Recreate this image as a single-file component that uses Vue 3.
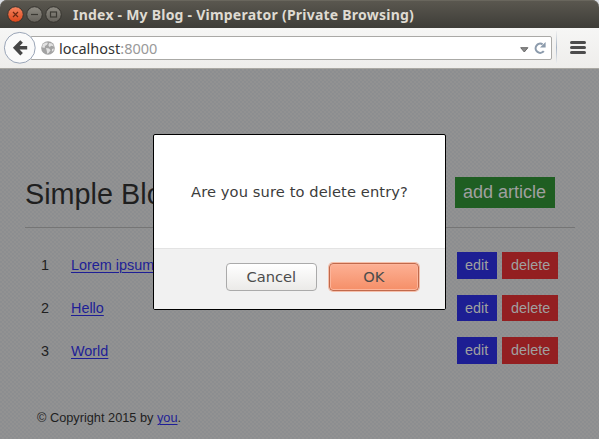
<script setup>
const entries = [
  { id: 1, title: 'Lorem ipsum' },
  { id: 2, title: 'Hello' },
  { id: 3, title: 'World' },
]
</script>

<template>
  <div class="window">
    <header class="titlebar">
      <svg class="controls" width="58" height="18" viewBox="0 0 58 18">
        <defs>
          <linearGradient id="close" x2="0" y2="1">
            <stop offset="0" stop-color="#f58560" />
            <stop offset="1" stop-color="#dc4519" />
          </linearGradient>
          <linearGradient id="gray" x2="0" y2="1">
            <stop offset="0" stop-color="#8d8a82" />
            <stop offset="1" stop-color="#65625b" />
          </linearGradient>
        </defs>
        <g stroke="#35332e">
          <circle cx="9.5" cy="8.5" r="7.8" fill="url(#close)" />
          <circle cx="28.5" cy="8.5" r="7.8" fill="url(#gray)" />
          <circle cx="47.5" cy="8.5" r="7.8" fill="url(#gray)" />
        </g>
        <g fill="none" stroke="#3b3933" stroke-width="1.2">
          <path d="M7 6l5 5M12 6l-5 5" stroke="#6a2812" />
          <path d="M25 8.5h7" />
          <rect x="44.5" y="6" width="6" height="5" />
        </g>
      </svg>
      <span class="title">Index - My Blog - Vimperator (Private Browsing)</span>
    </header>

    <nav class="toolbar">
      <svg class="back" width="34" height="34" viewBox="0 0 34 34">
        <circle cx="16.8" cy="16.8" r="15.4" fill="#fafafa" stroke="#9aa5b7" />
        <path d="M18.6 10.4l-6.2 6.4 6.2 6.4M12.6 16.8h11.6" fill="none" stroke="#464646" stroke-width="3.6" />
      </svg>
      <div class="address">
        <svg class="globe" width="14" height="14" viewBox="0 0 14 14">
          <circle cx="7" cy="7" r="6.8" fill="#a3a3a3" />
          <path d="M2 3l3-1.6 2 .4-1 2-2 1.2-.4 2L1 6.2zM8 2l3 .4 2 3-2.6-.6L8.6 6 7.4 4.4zM5 7l3 .4 1.6 1.8L7.6 12l-1.4.8-.4-2.8zM11 8l2-.6-.8 2.6-1.4.6z" fill="#e2e2e2" />
        </svg>
        <span class="url">localhost<span class="port">:8000</span></span>
        <svg class="drop" width="9" height="6" viewBox="0 0 9 6">
          <path d="M.7.7h7.2L4.3 5z" fill="#8a8a8a" stroke="#686868" />
        </svg>
        <svg class="reload" width="12" height="12" viewBox="0 0 12 12">
          <path d="M8.6 2.3A4.6 4.6 0 1 0 9.8 9.2" fill="none" stroke="#8c9bac" stroke-width="2.1" />
          <path d="M11.6 0v5.6H6z" fill="#8c9bac" />
        </svg>
      </div>
      <i class="divider"></i>
      <div class="menu"><i></i><i></i><i></i></div>
    </nav>

    <main class="page">
      <div class="heading">
        <h1>Simple Blog</h1>
        <a class="btn add">add article</a>
      </div>
      <ul class="entries">
        <li v-for="entry in entries" :key="entry.id">
          <span class="num">{{ entry.id }}</span>
          <a class="link">{{ entry.title }}</a>
          <a class="btn edit">edit</a>
          <a class="btn delete">delete</a>
        </li>
      </ul>
      <footer>© Copyright 2015 by <a class="link">you</a>.</footer>
    </main>

    <div class="dialog">
      <p>Are you sure to delete entry?</p>
      <div class="actions">
        <button class="cancel">Cancel</button>
        <button class="ok">OK</button>
      </div>
    </div>
  </div>
</template>

<style>
body { background: #929292; }
</style>

<style scoped>
* { box-sizing: border-box; }
.window {
  position: relative;
  width: 599px;
  height: 439px;
  overflow: hidden;
  display: flex;
  flex-direction: column;
  background: #d9dde2;
}
.titlebar {
  height: 28px;
  flex: none;
  display: flex;
  align-items: center;
  padding: 1px 0 0 6px;
  border-radius: 7px 7px 0 0;
  background: linear-gradient(#5b5850, #3e3d38);
  box-shadow: inset 0 1px #69665d;
}
.controls { flex: none; }
.title {
  margin-left: 9px;
  color: #dfdbd2;
  font: bold 14px/20px "Noto Sans", sans-serif;
  letter-spacing: 0.23px;
  white-space: nowrap;
}
.toolbar {
  height: 41px;
  flex: none;
  display: flex;
  align-items: flex-start;
  padding: 0 12px 0 3px;
  border-bottom: 1px solid #aaa8a3;
  background: linear-gradient(#f6f6f5, #eeedeb);
}
.back { position: relative; z-index: 1; flex: none; margin-top: 3px; }
.address {
  width: 522px;
  height: 24px;
  margin: 8px 0 0 -7px;
  display: flex;
  align-items: center;
  padding: 0 5px 0 10px;
  background: #fff;
  border: 1px solid #aaa9a6;
  border-radius: 2px;
}
.url {
  margin-left: 4px;
  color: #333;
  font: 14.5px/20px "Noto Sans", sans-serif;
}
.port { color: #999; }
.drop { margin: 3px 5px 0 auto; }
.divider {
  width: 1px;
  height: 33px;
  margin: 3px 13px 0 4px;
  background: linear-gradient(#f0f0f0, #a8b5c5 50%, #f0f0f0);
}
.menu { display: grid; gap: 2px; margin-top: 13px; }
.menu i { width: 16px; height: 3px; border-radius: 1.5px; background: #4c4c4c; }
.page {
  flex: 1;
  padding: 106px 24px 0 25px;
  color: #1f1f1f;
  font: 14.4px/20px "Liberation Sans", Arial, sans-serif;
  background-color: #929292;
  background-image: radial-gradient(circle at 1px 1px, #8b8d90 0.6px, transparent 1.1px), radial-gradient(circle at 3px 3px, #8b8d90 0.6px, transparent 1.1px);
  background-size: 4px 4px;
}
.heading {
  height: 53px;
  display: flex;
  justify-content: space-between;
  align-items: flex-start;
  padding: 2px 20px 0 0;
  border-bottom: 1px solid #757575;
}
h1 { margin: 0; font-size: 28.8px; line-height: 34px; font-weight: 400; }
.btn { color: #a0a0a0; padding: 0 8px; }
.add { width: 100px; background: #1f5e22; font-size: 18px; line-height: 30px; height: 31px; }
.entries { list-style: none; margin: 0; padding: 16px 17px 0 16px; }
.entries li { height: 42.7px; display: flex; align-items: center; }
.num { width: 30px; }
.link { color: #1e1e96; text-decoration: underline; text-underline-offset: 2px; text-decoration-thickness: 1px; }
.edit, .delete { height: 26.7px; line-height: 26px; padding: 0 0 0 8px; }
.edit { width: 40px; margin-left: auto; background: #1d1e93; }
.delete { width: 56px; margin-left: 5px; padding-left: 9px; background: #931f21; }
footer { margin-top: 36px; padding-left: 12px; font-size: 12.75px; line-height: 20px; }
.dialog {
  position: absolute;
  left: 153px;
  top: 134px;
  width: 293px;
  height: 176px;
  display: flex;
  flex-direction: column;
  border: 1px solid #000;
  border-radius: 2px;
  background: #fff;
  overflow: hidden;
}
.dialog p {
  margin: 0;
  height: 113px;
  text-align: center;
  color: #3c3c3c;
  font: 14.67px/113px "DejaVu Sans", sans-serif;
  letter-spacing: 0.1px;
}
.actions {
  flex: 1;
  display: flex;
  gap: 12px;
  padding: 14px 26px 0 72px;
  border-top: 1px solid #e3e3e3;
  background: #f1f1f1;
}
button {
  height: 28px;
  flex: 1;
  padding: 0;
  border: 1px solid #aaa;
  border-radius: 4px;
  color: #4c4c4c;
  font: 14.67px/26px "DejaVu Sans", sans-serif;
}
.cancel { background: linear-gradient(#fff, #ebeae8); }
.ok {
  border-color: #c1694b;
  background: linear-gradient(#fdb094, #f58f68);
  box-shadow: inset 0 0 0 1px #fcb59b, 0 0 0 1px #f5bfaa;
}
</style>
